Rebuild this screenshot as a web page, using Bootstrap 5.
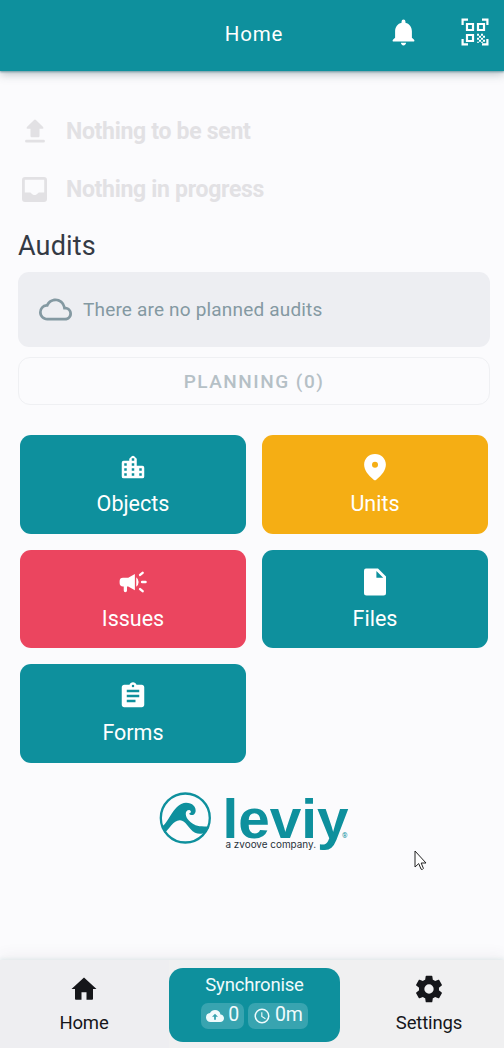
<!DOCTYPE html>
<html lang="en">
<head>
<meta charset="utf-8">
<meta name="viewport" content="width=device-width, initial-scale=1">
<title>Home</title>
<link href="https://cdn.jsdelivr.net/npm/bootstrap@5.3.0/dist/css/bootstrap.min.css" rel="stylesheet">
<style>
:root { --teal: #0e909d; }
body { font-family: Roboto, "Liberation Sans", sans-serif; background: #fbfbfd; height: 1048px; overflow: hidden; line-height: 1; }
svg { display: block; fill: currentColor; flex: none; }
.topbar { height: 71px; background: var(--teal); box-shadow: 0 1px 2px #6f9aa5, 0 3px 9px rgba(60,80,90,.35); display: grid; grid-template-columns: 1fr auto 1fr; z-index: 2; }
.topbar-title { font-size: 20.5px; letter-spacing: .8px; padding: 0 0 3px 4px; }
.topbar-icons { padding: 0 15px 7px 0; gap: 42px; }
.status-line { height: 58px; color: #e2e1e4; font-size: 23px; font-weight: 700; padding-left: 2px; gap: 16px; }
.status-line span { letter-spacing: -.3px; }
.page-body { padding: 31px 14px 0 18px; }
.section-title { font-size: 27px; color: #343a44; margin: 15px 0 12px; letter-spacing: .15px; line-height: 27px; font-weight: 400; }
.empty-box { height: 75px; border-radius: 11px; background: #edeef2; color: #8499a2; font-size: 19px; gap: 11px; padding-left: 21px; letter-spacing: .18px; }
.plan-btn { height: 48px; margin-top: 10px; border: 1px solid #eff0f3; border-radius: 12px; color: #b5c0c6; font-size: 19px; font-weight: 500; letter-spacing: 1.5px; }
.tiles { display: grid; grid-template-columns: 226px 226px; gap: 16px; margin: 30px 0 0 2px; }
.tile { height: 98.700px; border-radius: 11px; background: var(--teal); color: #fff; font-size: 21.5px; letter-spacing: 0; padding-top: 17px; gap: 11px; }
.tile-amber { background: #f5ae14; }
.tile-red { background: #eb455f; }
.brand { margin: 24px 0 0 137px; }
.bottom-bar { height: 88px; background: #f0f0f1; box-shadow: 0 -1px 4px #dfe8ea, 0 -5px 14px rgba(90,70,80,.06); color: #15161a; font-size: 18.5px; }
.tab { width: 169px; padding-top: 14px; gap: 10px; letter-spacing: -.15px; }
.tab-left { background: #eeeef1; padding-right: 1px; }
.tab-right { width: 164px; padding-left: 14px; }
.sync { width: 171px; height: 74px; margin-top: 8px; border-radius: 14px; background: var(--teal); color: #f0fbfc; padding-top: 7px; }
.sync-title { font-size: 18.5px; letter-spacing: -.2px; line-height: 20px; }
.chip { height: 26px; border-radius: 7px; background: #38a4b0; font-size: 19.5px; padding: 0 5px; gap: 4px; letter-spacing: -.2px; }
.chip span { line-height: 24px; height: 26px; }
.pointer { left: 414px; top: 850px; }
</style>
</head>
<body class="d-flex flex-column position-relative">
<header class="topbar align-items-center text-white flex-shrink-0">
  <span></span>
  <span class="topbar-title">Home</span>
  <div class="topbar-icons d-flex justify-content-end align-items-center">
    <svg width="31" height="31" viewBox="0 0 24 24"><path d="M12 22c1.100 0 2-.9 2-2h-4c0 1.100.9 2 2 2zm6.500-6v-5c0-3.370-2-5.900-5-6.600V3.500a1.500 1.500 0 0 0-3 0v.9c-3 .7-5 3.230-5 6.600v5L4 17.400c-.8.800-.5 1.600.5 1.600h15c1 0 1.300-.8.500-1.600z"/></svg>
    <svg width="28" height="28" viewBox="0 0 28 28"><g fill="none" stroke="currentColor" stroke-width="2.200"><path d="M1.600 7V1.600H7M21 1.600h5.400V7M1.600 21v5.400H7M21 26.400h5.400V21M6 6h6v6H6zM17 6h6v6h-6zM6 17h6v6H6z"/></g><path d="M16 15.800h2v2h-2zm4 0h2v2h-2zm-2 2h2v2h-2zm4 0h2v2h-2zm-6 2h2v2h-2zm4 0h2v2h-2zm-2 2h2v2h-2zm4 0h2v2h-2zm-6 2h2v1h-2zm4 0h2v1h-2z"/></svg>
  </div>
</header>

<main class="page-body flex-grow-1">
  <div class="status-line d-flex align-items-center">
    <svg width="30" height="29" viewBox="0 0 29 29"><path d="M14.500 2.500Q15 2.500 15.700 3.200L22.600 10q1 1.700-.5 1.700H19V19q0 1.200-1.200 1.200h-6.600Q10 20.200 10 19v-7.300H6.900Q5.400 11.700 6.400 10l6.900-6.800q.6-.7 1.200-.7zM6 22.700h17a1.450 1.450 0 0 1 0 2.900H6a1.450 1.450 0 0 1 0-2.900z"/></svg>
    <span>Nothing to be sent</span>
  </div>
  <div class="status-line d-flex align-items-center">
    <svg width="30" height="29" viewBox="0 0 29 29"><path fill-rule="evenodd" d="M4.500 2h19a3 3 0 0 1 3 3v19a3 3 0 0 1-3 3h-19a3 3 0 0 1-3-3V5a3 3 0 0 1 3-3zM4.300 4.800v12.600h5.200c1.300 0 1.800 2.500 4.600 2.500s3.200-2.500 4.600-2.500h5V4.800z"/></svg>
    <span>Nothing in progress</span>
  </div>
  <h1 class="section-title">Audits</h1>
  <div class="empty-box d-flex align-items-center">
    <svg width="33" height="33" viewBox="0 0 24 24"><path d="M19.350 10.040A7.490 7.490 0 0 0 12 4C9.110 4 6.600 5.640 5.350 8.040A5.994 5.994 0 0 0 0 14c0 3.310 2.690 6 6 6h13c2.760 0 5-2.240 5-5 0-2.640-2.050-4.780-4.650-4.960zM19 18H6c-2.210 0-4-1.790-4-4 0-2.050 1.530-3.760 3.560-3.970l1.070-.11.5-.95A5.469 5.469 0 0 1 12 6c2.620 0 4.880 1.860 5.390 4.430l.3 1.500 1.530.11A2.980 2.980 0 0 1 22 15c0 1.650-1.350 3-3 3z"/></svg>
    <span>There are no planned audits</span>
  </div>
  <div class="plan-btn d-flex align-items-center justify-content-center">PLANNING (0)</div>

  <div class="tiles">
    <div class="tile d-flex flex-column align-items-center">
      <svg width="30" height="30" viewBox="0 0 24 24"><path fill-rule="evenodd" d="M15 11V5.400L13 3.400Q12 2.500 11 3.400L9 5.400V7H4.500Q3 7 3 8.500v11Q3 21 4.500 21h15q1.500 0 1.500-1.500v-7q0-1.500-1.500-1.500zM5 9h2v2H5zm0 4h2v2H5zm0 4h2v2H5zm6-12h2v2h-2zm0 4h2v2h-2zm0 4h2v2h-2zm0 4h2v2h-2zm6-4h2v2h-2zm0 4h2v2h-2z"/></svg>
      <span>Objects</span>
    </div>
    <div class="tile tile-amber d-flex flex-column align-items-center">
      <svg width="30" height="30" viewBox="0 0 24 24"><path fill-rule="evenodd" d="M12 1.500C7 1.500 3.300 5.300 3.300 10c0 4.400 3 8.300 7.900 12.300q.8.600 1.600 0c4.900-4 7.900-7.900 7.900-12.300 0-4.700-3.700-8.500-8.700-8.500zm0 6.300a2.400 2.400 0 1 1 0 4.800 2.400 2.400 0 0 1 0-4.800z"/></svg>
      <span>Units</span>
    </div>
    <div class="tile tile-red d-flex flex-column align-items-center">
      <svg width="30" height="30" viewBox="0 0 24 24"><g fill="none" stroke="currentColor" stroke-width="2" stroke-linecap="round"><path d="M19.300 12h2.700M17.700 6.300l2-1.600M17.700 17.700l2 1.600"/></g><path d="M4 8.500A2.700 2.700 0 0 0 1.300 11.200v1.600A2.700 2.700 0 0 0 4 15.500h.6v3.300a1.200 1.200 0 0 0 2.600 0v-3.300h1L13.500 18.500v-13L8.200 8.500zm10.600-.3v7.600a4.800 4.800 0 0 0 1.900-3.800 4.800 4.800 0 0 0-1.900-3.800z"/></svg>
      <span>Issues</span>
    </div>
    <div class="tile d-flex flex-column align-items-center">
      <svg width="30" height="30" viewBox="0 0 30 30"><path fill-rule="evenodd" d="M6 1.500h12l8 8V26a2.500 2.500 0 0 1-2.500 2.500H6.500A2.500 2.500 0 0 1 4 26V3.800Q4 1.500 6 1.500zM16.400 4v6.800h6.800z"/></svg>
      <span>Files</span>
    </div>
    <div class="tile d-flex flex-column align-items-center">
      <svg width="30" height="30" viewBox="0 0 24 24"><path fill-rule="evenodd" d="M19 3h-4.180C14.400 1.840 13.300 1 12 1s-2.400.84-2.820 2H5c-1.100 0-2 .9-2 2v14c0 1.100.9 2 2 2h14c1.100 0 2-.9 2-2V5c0-1.100-.9-2-2-2zm-7-.1a1 1 0 1 1 0 2 1 1 0 0 1 0-2zM14 17H7v-2h7zm3-4H7v-2h10zm0-4H7V7h10z"/></svg>
      <span>Forms</span>
    </div>
  </div>

  <svg class="brand" width="200" height="70" viewBox="0 0 200 70">
    <circle cx="30.300" cy="31" r="24.500" fill="none" stroke="#0e909d" stroke-width="2.300"/>
    <path fill="#0e909d" d="M7.500 39C14 35 19 16 31 15.700c6.500 0 10.300 4.300 9.600 8.800-.6 4-5 4.700-6.600 2 2.700-.3 2.400-3.200.2-3.500-5 .2-4 7-.3 10.500 5 5.500 11 6.500 20.300 5.700C52 46 46 48.500 40 45.700 33.500 42.500 31 33.300 25 33.300 18.500 33 14 42.500 9.500 46z"/>
    <text x="67.500" y="51" font-family="Liberation Sans, sans-serif" font-weight="700" font-size="55" fill="#0e909d" textLength="126" lengthAdjust="spacingAndGlyphs">leviy</text>
    <text x="70.500" y="61" font-family="Inter, sans-serif" font-size="10" fill="#29323b" textLength="90.500" lengthAdjust="spacingAndGlyphs">a zvoove company.</text>
    <text x="187" y="51" font-family="Roboto, sans-serif" font-size="7" fill="#0e909d">®</text>
  </svg>
</main>

<nav class="bottom-bar d-flex flex-shrink-0">
  <div class="tab tab-left d-flex flex-column align-items-center">
    <svg width="30" height="30" viewBox="0 0 24 24"><path d="M10 20.500v-6h4v6h4.500q.7 0 .7-.7V12H22L12 2.700 2 12h2.800v7.800q0 .7.700.7z"/></svg>
    <span>Home</span>
  </div>
  <div class="sync d-flex flex-column align-items-center">
    <span class="sync-title">Synchronise</span>
    <div class="d-flex gap-1 mt-2">
      <div class="chip d-flex align-items-center">
        <svg width="18" height="18" viewBox="0 0 24 24"><path d="M19.350 10.040A7.490 7.490 0 0 0 12 4C9.110 4 6.600 5.640 5.350 8.040A5.994 5.994 0 0 0 0 14c0 3.310 2.690 6 6 6h13c2.760 0 5-2.240 5-5 0-2.640-2.050-4.780-4.650-4.960zM13.200 13v4h-2.400v-4H8l4-4 4 4z" fill-rule="evenodd"/></svg>
        <span>0</span>
      </div>
      <div class="chip d-flex align-items-center">
        <svg width="18" height="18" viewBox="0 0 24 24"><path d="M12 2a10 10 0 1 0 0 20 10 10 0 0 0 0-20zm0 18a8 8 0 1 1 0-16 8 8 0 0 1 0 16zm.5-13H11v6l5.200 3.200.8-1.300-4.500-2.700z"/></svg>
        <span>0m</span>
      </div>
    </div>
  </div>
  <div class="tab tab-right d-flex flex-column align-items-center">
    <svg width="32" height="32" viewBox="0 0 24 24" style="margin:-1px 0"><path d="M19.430 12.980c.04-.32.070-.64.070-.98s-.03-.66-.07-.98l2.110-1.650c.19-.15.240-.42.120-.64l-2-3.460c-.12-.22-.39-.3-.61-.22l-2.490 1c-.52-.4-1.080-.73-1.690-.98l-.38-2.650A.488.488 0 0 0 14 2h-4c-.25 0-.46.180-.49.420l-.38 2.650c-.61.250-1.170.590-1.690.980l-2.490-1c-.23-.09-.49 0-.61.220l-2 3.460c-.13.220-.07.490.120.640l2.110 1.650c-.04.320-.07.650-.07.980s.03.660.070.980l-2.110 1.650c-.19.150-.24.420-.12.640l2 3.460c.12.220.390.300.610.220l2.490-1c.52.400 1.080.730 1.690.980l.38 2.650c.03.240.240.420.490.420h4c.25 0 .46-.18.490-.42l.38-2.650c.61-.25 1.170-.59 1.690-.98l2.490 1c.23.090.49 0 .61-.22l2-3.460c.12-.22.070-.49-.12-.64zM12 15.500a3.500 3.500 0 1 1 0-7 3.500 3.500 0 0 1 0 7z"/></svg>
    <span>Settings</span>
  </div>
</nav>
<svg class="pointer position-absolute" width="14" height="22" viewBox="0 0 14 22"><path d="M1 1v16l3.700-3.400 2.400 5.600q1.300 1 2.300-.8L7.200 13H12z" fill="#fff" stroke="#222" stroke-width="1"/></svg>
<script src="https://cdn.jsdelivr.net/npm/bootstrap@5.3.0/dist/js/bootstrap.bundle.min.js"></script>
</body>
</html>
